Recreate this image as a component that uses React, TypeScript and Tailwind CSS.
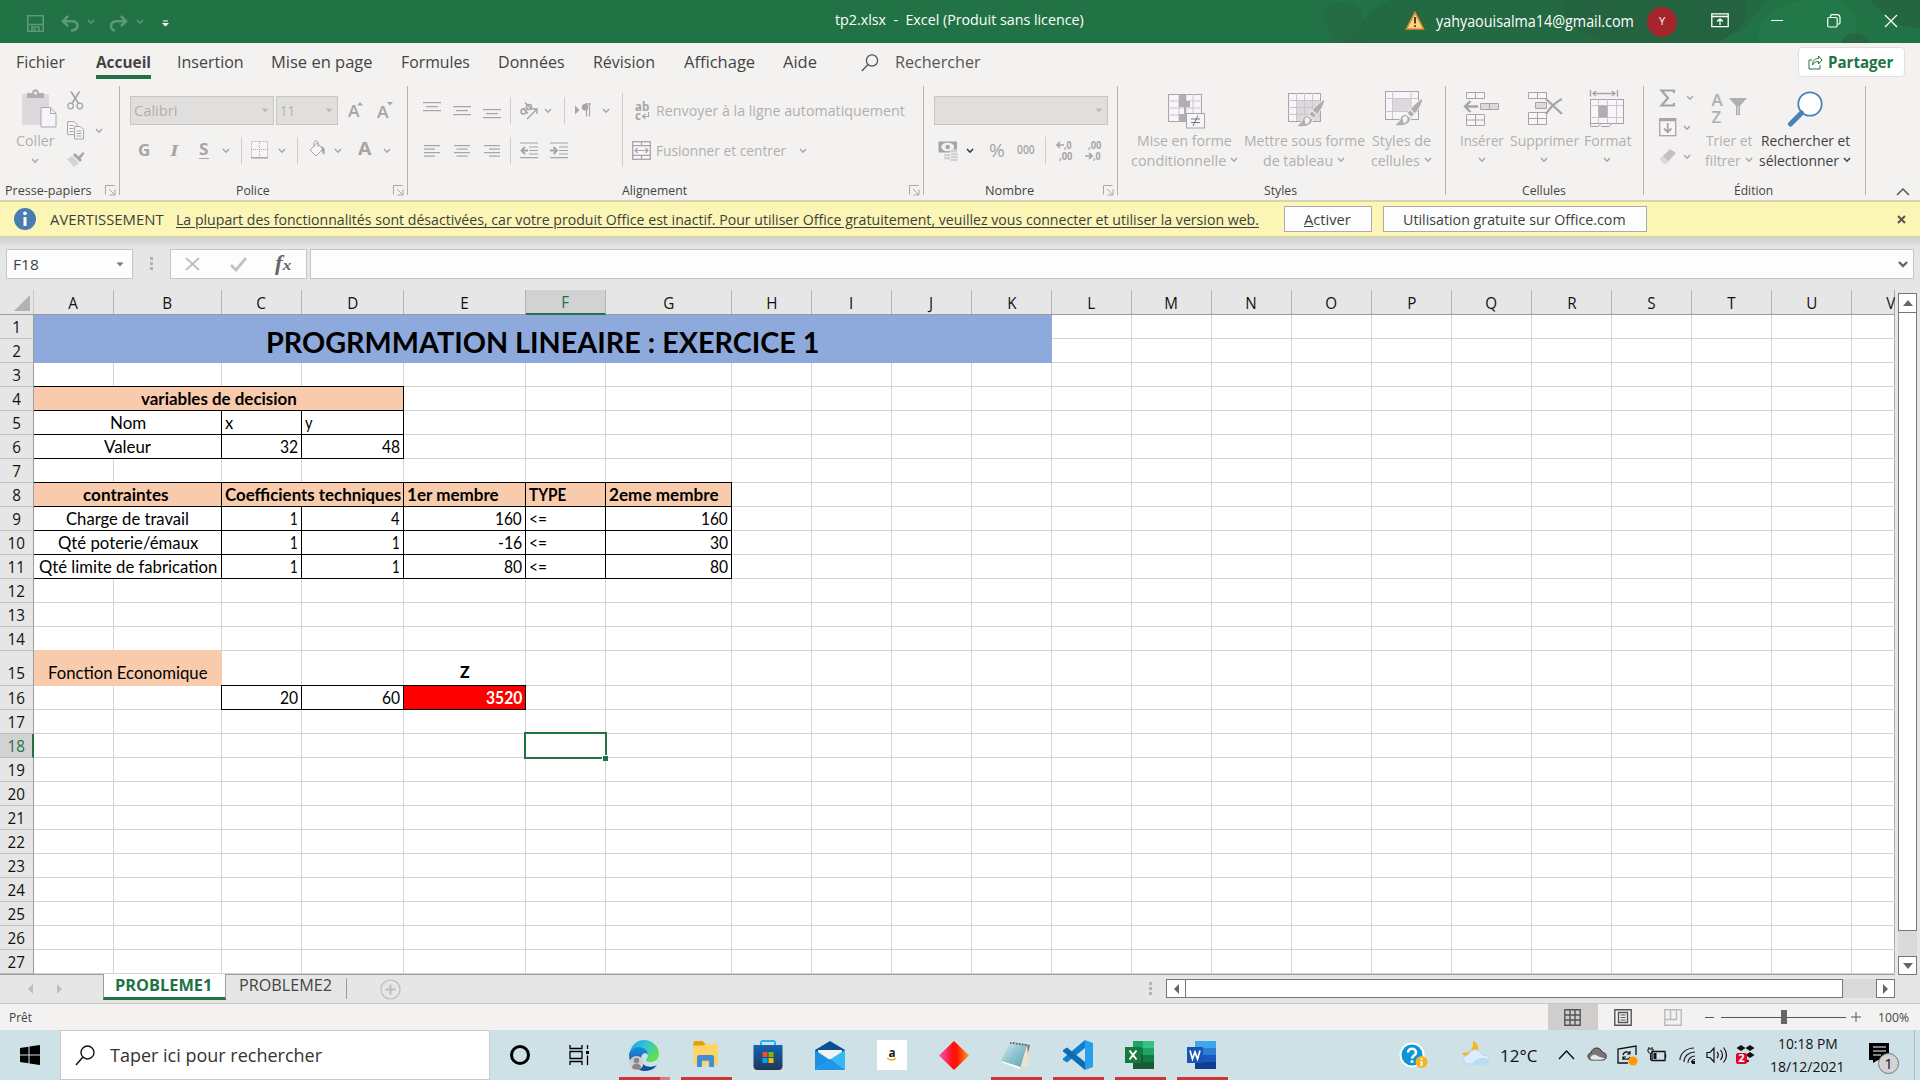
import { useLayoutEffect, useRef, useState, type ReactNode } from "react";

/* Text squeezed or stretched horizontally to a known width. */
function Fit({ w, className = "", children }: { w: number; className?: string; children: ReactNode }) {
  const ref = useRef<HTMLSpanElement>(null);
  const [scale, setScale] = useState(1);
  useLayoutEffect(() => {
    if (ref.current && ref.current.offsetWidth) setScale(w / ref.current.offsetWidth);
  }, [w]);
  return (
    <span className={"block shrink-0 whitespace-nowrap leading-none " + className} style={{ width: w }}>
      <span ref={ref} className="inline-block origin-left leading-none whitespace-pre" style={{ transform: `scaleX(${scale})` }}>
        {children}
      </span>
    </span>
  );
}

function Svg({ w, h, className = "", children }: { w: number; h: number; className?: string; children: ReactNode }) {
  return (
    <svg width={w} height={h} viewBox={`0 0 ${w} ${h}`} fill="none" className={"block shrink-0 " + className}>
      {children}
    </svg>
  );
}

const G = "#a6a4a6";
const GF = "#b0aeb2";

function Chev({ className = "", color = "#a9a7a9" }: { className?: string; color?: string }) {
  return (
    <Svg w={8} h={6} className={className}>
      <path d="M1 1l3 3.2L7 1" stroke={color} strokeWidth="1.5" />
    </Svg>
  );
}
function Tri({ className = "", color = "#777" }: { className?: string; color?: string }) {
  return (
    <Svg w={8} h={5} className={className}>
      <path d="M.5.5h7L4 4.5z" fill={color} />
    </Svg>
  );
}
const Sep = ({ className = "" }: { className?: string }) => <div className={"h-[27px] w-px shrink-0 bg-[#cfcdcc] " + className} />;

function Launcher({ className = "" }: { className?: string }) {
  return (
    <Svg w={11} h={11} className={className}>
      <path d="M.5 9.500V.5h9M4 4l5.500 5.500M10 4.500V10H4.500" stroke="#a9a7a5" />
    </Svg>
  );
}

function Lines({ rows, className = "", w = 18 }: { rows: number[][]; className?: string; w?: number }) {
  return (
    <Svg w={w} h={18} className={className}>
      {rows.map(([x, y, len]) => (
        <rect key={y} x={x} y={y} width={len} height="1.200" fill={G} />
      ))}
    </Svg>
  );
}

/* ---------- title bar ---------- */
function TitleBar() {
  return (
    <div className="relative flex h-[43px] items-center overflow-hidden bg-[#217346] text-white">
      <svg className="absolute right-0 top-0" width="640" height="43" viewBox="0 0 640 43">
        <path d="M45 8C58-2 78 2 82 14c4 10-2 16 4 29H50c8-12-14-22-5-35z" fill="#246b43" />
        <path d="M110 0h375c-8 14-16 26-30 34l-34 9H60c26-6 14-28 50-43z" fill="#246640" opacity=".75" />
        <path d="M284 0h180c6 16-4 33-28 43H330c-30-8-50-24-46-43z" fill="#246340" />
        <path d="M480 43c-10-20 20-43 50-43h30c20 14 20 30 12 43z" fill="#227848" />
        <path d="M562 43c2-12 20-14 28 0zM590 0h50v28c-20 2-36-12-50-28z" fill="#246640" />
      </svg>
      <Svg w={17} h={17} className="ml-[27px] mt-[3px]">
        <path d="M.8.8h15.400v15.400H.8zM1 9.500h15M5 16v-4h7v4M7.500 13v3" stroke="#5d9877" strokeWidth="1.600" />
      </Svg>
      <Svg w={19} h={17} className="ml-[17px] mt-1">
        <path d="M2 6.200h9.500c7 .3 7 8.800-1.500 9.300M7 1L2 6.200l5 5" stroke="#5d9877" strokeWidth="2.600" />
      </Svg>
      <Chev className="ml-[7px]" color="#5d9877" />
      <Svg w={19} h={17} className="ml-[14px] mt-1">
        <path d="M17 6.200H7.500c-7 .3-7 8.800-1.500 9.300M12 1l5 5.200-5 5" stroke="#5d9877" strokeWidth="2.600" />
      </Svg>
      <Chev className="ml-[8px]" color="#5d9877" />
      <Svg w={7} h={7} className="ml-[18px] mt-[3px]">
        <path d="M1 1h5" stroke="#fff" />
        <path d="M0 3h7L3.500 6.500z" fill="#fff" />
      </Svg>
      <Fit w={249} className="ml-[666px] mt-[-5px] text-[15px]">tp2.xlsx  -  Excel (Produit sans licence)</Fit>
      <div className="relative ml-auto flex items-center">
        <Svg w={20} h={19} className="-mt-[2px]">
          <path d="M10 1.500L18.500 18h-17z" fill="#fbd488" stroke="#e08a2c" strokeWidth="1.600" />
          <path d="M10 6v6.500M10 14.300v1.800" stroke="#333" strokeWidth="1.800" />
        </Svg>
        <Fit w={198} className="ml-[11px] text-[15.5px]">yahyaouisalma14@gmail.com</Fit>
        <div className="ml-[13px] grid size-[30px] place-items-center rounded-full bg-[#a4262c] text-[11px]">Y</div>
        <Svg w={18} h={15} className="ml-[34px] -mt-[2px]">
          <path d="M.8.8h16.400v12.900H.8zM1 3.500h16M9 12V6M6 8.500L9 5.800l3 2.700" stroke="#fff" strokeWidth="1.300" />
        </Svg>
        <div className="-mt-[2px] ml-[42px] h-px w-[12px] bg-white" />
        <Svg w={14} h={14} className="ml-[44px] -mt-[2px]">
          <rect x=".7" y="3.500" width="9.500" height="9.500" rx="1.500" stroke="#fff" strokeWidth="1.200" />
          <path d="M3.500 3V1.800Q3.500.7 5 .7h5q3 0 3 3v5q0 1.500-2 1.500" stroke="#fff" strokeWidth="1.200" />
        </Svg>
        <Svg w={14} h={14} className="ml-[43px] mr-[22px] -mt-[2px]">
          <path d="M1 1l12 12M13 1L1 13" stroke="#fff" strokeWidth="1.300" />
        </Svg>
      </div>
    </div>
  );
}

/* ---------- ribbon tabs ---------- */
const tabs: [string, number, string][] = [
  ["Fichier", 49, "ml-[16px]"],
  ["Accueil", 55, "ml-[31px]"],
  ["Insertion", 67, "ml-[26px]"],
  ["Mise en page", 102, "ml-[27px]"],
  ["Formules", 69, "ml-[28px]"],
  ["Données", 67, "ml-[28px]"],
  ["Révision", 62, "ml-[28px]"],
  ["Affichage", 71, "ml-[29px]"],
  ["Aide", 34, "ml-[28px]"],
];
function Tabs() {
  return (
    <div className="flex h-[43px] text-[#444]">
      {tabs.map(([t, w, m]) => (
        <div key={t} className={"flex h-[36px] flex-col pt-[11px] " + m}>
          <Fit w={w} className={t === "Accueil" ? "text-[16.5px] font-bold" : "text-[16.5px]"}>{t}</Fit>
          {t === "Accueil" && <div className="mt-auto h-[4px] bg-[#217346]" />}
        </div>
      ))}
      <Svg w={18} h={18} className="ml-[44px] mt-[11px]">
        <circle cx="11" cy="6.500" r="5.600" stroke="#555" strokeWidth="1.300" />
        <path d="M7 10.500L.8 17" stroke="#555" strokeWidth="1.400" />
      </Svg>
      <Fit w={86} className="ml-[16px] mt-[11px] text-[16.5px] text-[#555]">Rechercher</Fit>
      <div className="ml-auto mr-[15px] mt-[4px] flex h-[30px] w-[107px] items-center rounded border border-[#e1dfdd] bg-white">
        <Svg w={15} h={15} className="ml-[9px]">
          <path d="M4 5H1v9h11v-4M4.500 10c0-5 3-6.500 6-6.500V1l3.500 4-3.500 4V6.500c-3 0-4.500 1-6 3.500z" stroke="#217346" />
        </Svg>
        <Fit w={65} className="ml-[5px] text-[16px] font-bold text-[#217346]">Partager</Fit>
      </div>
    </div>
  );
}

/* ---------- ribbon ---------- */
function Group({ w, label, lw, lx, children, launcher = "" }: { w: string; label: string; lw: number; lx: string; children: ReactNode; launcher?: string }) {
  return (
    <div className={"flex h-[109px] shrink-0 flex-col border-r border-[#b5b3b1] " + w}>
      <div className="flex h-[96px] shrink-0">{children}</div>
      <div className="flex h-[13px] items-center">
        <Fit w={lw} className={"mt-[3px] text-[13px] text-[#444] " + lx}>{label}</Fit>
        {launcher && <Launcher className={"mt-[4px] " + launcher} />}
      </div>
    </div>
  );
}

function Big({ w, icon, l1, w1, l2 = "", w2 = 0, dark = false }: { w: string; icon: ReactNode; l1: string; w1: number; l2?: string; w2?: number; dark?: boolean }) {
  return (
    <div className={"flex shrink-0 flex-col items-center text-[15px] " + w + (dark ? " text-[#3f3f3f]" : " text-[#b1afad]")}>
      <div className="flex h-[46px] items-center">{icon}</div>
      <Fit w={w1} className="mt-[1px]">{l1}</Fit>
      <div className="mt-[5px] flex items-center gap-[4px]">
        {l2 && <Fit w={w2}>{l2}</Fit>}
        <Chev className={l2 ? "-mt-[2px]" : "mt-[4px]"} color={dark ? "#444" : "#a9a7a9"} />
      </div>
    </div>
  );
}

const brush = (
  <>
    <path d="M36.500 7c-7 5-12 10-15.500 15.500l4.500 3.500c5-4 9-10 11-16z" fill={GF} stroke="#f3f2f1" />
    <path d="M24 18.500l5 4.500" stroke="#f3f2f1" strokeWidth="1.300" />
    <path d="M20 23.500c-5 0-5 3-6 5s-3 4-6 6c8 1 15 0 17-7z" fill={GF} stroke="#f3f2f1" />
    <path d="M17 26c3-2 6 1 4 4-1 2-3 2-4 2 1-2-1-2 0-6z" fill="#f3f2f1" />
  </>
);

function Ribbon() {
  return (
    <div className="flex h-[115px] border-b border-[#d2d0ce]">
      <Group w="w-[120px]" label="Presse-papiers" lw={87} lx="ml-[5px]" launcher="ml-[13px]">
        <div className="ml-[10px] flex w-[50px] flex-col items-center text-[15px] text-[#b1afad]">
          <Svg w={36} h={40} className="ml-[8px] mt-[3px]">
            <rect x="1" y="5" width="27" height="31" rx="1.500" fill="#dcd8dc" />
            <path d="M6 9V4h5c0-5 7-5 7 0h5v5z" fill="#b0aeb2" />
            <circle cx="14.500" cy="4" r="1.500" fill="#f3f2f1" />
            <path d="M20 18.500h9.500l5.500 6V38H20z" fill="#f7f4fa" stroke="#aaa8ac" />
            <path d="M29.500 18.500v6H35" stroke="#aaa8ac" />
          </Svg>
          <Fit w={39} className="mt-[4px]">Coller</Fit>
          <Chev className="mt-[10px]" />
        </div>
        <div className="ml-[7px] flex w-[40px] flex-col">
          <Svg w={17} h={19} className="mt-[5px]">
            <path d="M4 .5l7.500 12M12.500.5L5 12.500" stroke={G} strokeWidth="1.700" />
            <circle cx="3.600" cy="15" r="2.800" stroke={G} strokeWidth="1.300" />
            <circle cx="12.800" cy="15" r="2.800" stroke={G} strokeWidth="1.300" />
          </Svg>
          <div className="mt-[11px] flex items-center">
            <Svg w={18} h={19}>
              <path d="M.6.6h6.500l3 3v10H.6zM2.500 4.500h4M2.500 7.500h4M2.500 10.500h4" stroke={G} fill="#f7f4fa" />
              <path d="M7.600 5.500h6l3 3V18h-9zM9.500 10h5M9.500 12.500h5M9.500 15h5" stroke={G} fill="#f7f4fa" />
            </Svg>
            <Chev className="ml-[10px]" />
          </div>
          <Svg w={18} h={16} className="mt-[11px]">
            <path d="M0 8l5-3 7 7-5 4z" fill="#d6d3d6" />
            <path d="M6 4l2-2 7 7-2 2z" fill={G} />
            <path d="M11 6l5-5 1.500 1.500-4.500 5.500z" fill={G} />
          </Svg>
        </div>
      </Group>

      <Group w="w-[288px]" label="Police" lw={34} lx="ml-[116px]" launcher="ml-[123px]">
        <div className="flex flex-col">
          <div className="mt-[10px] flex h-[29px] items-center text-[#b1afad]">
            <div className="ml-[10px] flex h-[29px] w-[144px] items-center border border-[#c8c6c4] bg-[#e1dfdd] px-[3px]">
              <Fit w={43} className="text-[15px]">Calibri</Fit>
              <Tri className="ml-auto mr-[1px]" color="#bdbbb9" />
            </div>
            <div className="ml-[2px] flex h-[29px] w-[62px] items-center border border-[#c8c6c4] bg-[#e1dfdd] px-[3px]">
              <Fit w={15} className="text-[15px]">11</Fit>
              <Tri className="ml-auto mr-[1px]" color="#bdbbb9" />
            </div>
            <Fit w={12} className="ml-[10px] mt-[1px] text-[16px] font-semibold text-[#a6a4a6]">A</Fit>
            <Svg w={6} h={4} className="ml-[-3px] mt-[-14px]"><path d="M0 3.500L3 0l3 3.500z" fill={G} /></Svg>
            <Fit w={12} className="ml-[14px] mt-[3px] text-[16px] font-semibold text-[#a6a4a6]">A</Fit>
            <Svg w={6} h={4} className="ml-[-2px] mt-[-14px]"><path d="M0 0h6L3 3.500z" fill={G} /></Svg>
          </div>
          <div className="mt-[12px] flex h-[27px] items-center text-[15.5px] font-bold text-[#a6a4a6]">
            <Fit w={12} className="ml-[18px]">G</Fit>
            <Fit w={9} className="ml-[20px] font-['Liberation_Serif'] text-[17px] italic">I</Fit>
            <Fit w={10} className="ml-[20px] border-b border-[#a6a4a6]">S</Fit>
            <Chev className="ml-[13px]" />
            <Sep className="ml-[11px]" />
            <Svg w={18} h={18} className="ml-[9px] mt-[-2px]">
              <rect x=".5" y=".5" width="16" height="16" fill="#f7f4fa" stroke={G} strokeDasharray="1 1" />
              <path d="M8.500 0v16M0 8.500h17" stroke={G} strokeDasharray="1 1" />
              <path d="M0 16.800h17" stroke={G} strokeWidth="1.500" />
            </Svg>
            <Chev className="ml-[9px]" />
            <Sep className="ml-[11px]" />
            <Svg w={18} h={18} className="ml-[10px] mt-[-4px]">
              <path d="M2 10l7-7 6 6-7 7z" fill="#f7f4fa" stroke={G} />
              <path d="M6 7V3c0-3 4-3 4 0v4" stroke={G} />
              <path d="M13 6c3 1 5 3 3 9-2-2-2-4-3-9z" fill={G} />
            </Svg>
            <Chev className="ml-[8px]" />
            <Fit w={13} className="ml-[16px] mt-[-6px] text-[18px]">A</Fit>
            <Chev className="ml-[12px]" />
          </div>
        </div>
      </Group>

      <Group w="w-[516px]" label="Alignement" lw={65} lx="ml-[214px]" launcher="ml-[222px]">
        <div className="flex flex-col">
          <div className="mt-[10px] flex h-[29px] items-center">
            <Lines className="ml-[15px]" rows={[[0, 0, 18], [3, 4, 12], [0, 8, 18]]} />
            <Lines className="ml-[12px]" rows={[[0, 4, 18], [3, 8, 12], [0, 12, 18]]} />
            <Lines className="ml-[12px]" rows={[[0, 7, 18], [3, 11, 12], [0, 15, 18]]} />
            <Sep className="ml-[9px]" />
            <Svg w={20} h={20} className="ml-[8px]">
              <circle cx="4.500" cy="10.500" r="2.500" stroke={G} strokeWidth="1.500" />
              <path d="M4 7l5 5.500M6 1.500l6.500 6.500" stroke={G} strokeWidth="1.500" />
              <circle cx="10" cy="6" r="2.500" stroke={G} strokeWidth="1.500" />
              <path d="M8 18l9.500-9.500M13 8h5v5" stroke={G} strokeWidth="1.400" />
            </Svg>
            <Chev className="ml-[5px]" />
            <Sep className="ml-[12px]" />
            <Svg w={17} h={15} className="ml-[10px]">
              <path d="M0 2.500l4.500 4.500L0 11.500z" fill={G} />
              <path d="M10 .8h6M11.500 1v12.500M14.500 1v12.500" stroke={G} strokeWidth="1.200" />
              <circle cx="10" cy="4.300" r="3.200" fill={G} />
            </Svg>
            <Chev className="ml-[10px] mr-[2px]" />
          </div>
          <div className="mt-[12px] flex h-[27px] items-center">
            <Lines className="ml-[16px]" w={16} rows={[[0, 3, 16], [0, 6.500, 11], [0, 10, 16], [0, 13.500, 11]]} />
            <Lines className="ml-[14px]" w={16} rows={[[0, 3, 16], [2.500, 6.500, 11], [0, 10, 16], [2.500, 13.500, 11]]} />
            <Lines className="ml-[14px]" w={16} rows={[[0, 3, 16], [5, 6.500, 11], [0, 10, 16], [5, 13.500, 11]]} />
            <Sep className="ml-[10px]" />
            <Svg w={18} h={17} className="ml-[9px]">
              <path d="M0 1h18M9 5h9M9 8.500h9M9 12h9M0 15.700h18" stroke={G} strokeWidth="1.200" />
              <path d="M8 8.500H1.500M5 5L1.500 8.500 5 12" stroke={G} strokeWidth="1.900" />
            </Svg>
            <Svg w={18} h={17} className="ml-[12px]">
              <path d="M0 1h18M9 5h9M9 8.500h9M9 12h9M0 15.700h18" stroke={G} strokeWidth="1.200" />
              <path d="M0 8.500h6.500M3.500 5L7 8.500 3.500 12" stroke={G} strokeWidth="1.900" />
            </Svg>
          </div>
        </div>
        <div className="ml-[10px] mt-[7px] h-[74px] w-px bg-[#cfcdcc]" />
        <div className="flex flex-col text-[15px] text-[#b1afad]">
          <div className="mt-[10px] flex h-[29px] items-center">
            <div className="ml-[12px] flex w-[17px] flex-col text-[11.5px] font-bold text-[#a6a4a6]">
              <div className="h-[9px] leading-[9px]">ab</div>
              <div className="flex h-[9px] leading-[9px]">c
                <Svg w={9} h={8} className="mt-[1px]"><path d="M7.500 0v4.500H2M4.500 2L1.500 4.500l3 2.500" stroke={G} strokeWidth="1.200" /></Svg>
              </div>
            </div>
            <Fit w={249} className="ml-[4px]">Renvoyer à la ligne automatiquement</Fit>
          </div>
          <div className="mt-[12px] flex h-[27px] items-center">
            <Svg w={19} h={19} className="ml-[9px]">
              <rect x=".7" y=".7" width="17.600" height="17.600" fill="#f7f4fa" stroke={G} strokeWidth="1.300" />
              <path d="M.7 4.700h17.600M.7 14.300h17.600M9.500.7v4M9.500 14.300v4M3 9.500h13M5.500 7L3 9.500 5.500 12M13.500 7L16 9.500 13.500 12" stroke={G} strokeWidth="1.200" />
            </Svg>
            <Fit w={130} className="ml-[5px]">Fusionner et centrer</Fit>
            <Chev className="ml-[13px]" />
          </div>
        </div>
      </Group>

      <Group w="w-[194px]" label="Nombre" lw={49} lx="ml-[61px]" launcher="ml-[69px]">
        <div className="flex flex-col">
          <div className="ml-[10px] mt-[10px] flex h-[29px] w-[174px] items-center justify-end border border-[#c8c6c4] bg-[#e1dfdd] pr-[4px]">
            <Tri color="#bdbbb9" />
          </div>
          <div className="mt-[12px] flex h-[27px] items-center text-[#a6a4a6]">
            <Svg w={20} h={20} className="ml-[14px]">
              <rect x=".5" y=".5" width="18.500" height="11" fill={G} />
              <ellipse cx="9.700" cy="6" rx="6.500" ry="4.200" fill="#f3f2f1" />
              <circle cx="9.700" cy="6" r="2.200" fill={G} />
              <path d="M12 8.500h8V20H5v-8h7z" fill="#f3f2f1" />
              <path d="M12.500 9.500h6v1.500h-6zM13.500 12.500h6V14h-6zM6.500 13.500h5.500V15H6.500zM13.500 15.500h6V17h-6zM6.500 16.500h5.500V18H6.500zM13 18.500h6v1h-6z" fill="#d6d3d6" stroke="#c4c1c6" strokeWidth=".5" />
            </Svg>
            <Chev className="ml-[8px]" color="#333" />
            <Fit w={16} className="ml-[15px] mt-[-2px] text-[18px]">%</Fit>
            <Fit w={18} className="ml-[12px] mt-[-2px] text-[12px] font-semibold">000</Fit>
            <Sep className="ml-[10px]" />
            <div className="ml-[10px] flex flex-col items-end gap-[1px] text-[10px] font-bold">
              <div className="flex items-center"><Svg w={8} h={8}><path d="M8 4H1.500M4 1L1 4l3 3" stroke={G} strokeWidth="1.700" /></Svg><Fit w={8}>,0</Fit></div>
              <Fit w={13}>,00</Fit>
            </div>
            <div className="ml-[13px] flex flex-col items-end gap-[1px] text-[10px] font-bold">
              <Fit w={13}>,00</Fit>
              <div className="flex items-center"><Svg w={8} h={8}><path d="M0 4h6.500M4 1l3 3-3 3" stroke={G} strokeWidth="1.700" /></Svg><Fit w={8}>,0</Fit></div>
            </div>
          </div>
        </div>
      </Group>

      <Group w="w-[328px]" label="Styles" lw={33} lx="ml-[146px]">
        <Big w="ml-[12px] w-[108px]" l1="Mise en forme" w1={95} l2="conditionnelle" w2={95} icon={
          <Svg w={37} h={36} className="ml-[4px] mt-[3px]">
            <rect x=".5" y="1.500" width="33" height="27" fill="#f7f4fa" stroke={G} />
            <path d="M11 1v28M18 1v28M25 1v28M0 8h34M0 15h34M0 22h34" stroke="#cac7cc" />
            <path d="M11 2h7v6h4v6h-4v8h3v6H11v-7h5v-7h-5z" fill={GF} />
            <rect x="18.500" y="20.500" width="18" height="14.500" fill="#f7f4fa" stroke={G} />
            <path d="M23 26h9M23 29.500h9M30 22.500L25 33" stroke="#777" />
          </Svg>} />
        <Big w="ml-[-2px] w-[136px]" l1="Mettre sous forme" w1={121} l2="de tableau" w2={70} icon={
          <Svg w={37} h={36} className="ml-[5px] mt-[2px]">
            <rect x=".5" y="1.500" width="32" height="28" fill="#f7f4fa" stroke={G} />
            <path d="M9 9h23v20H9z" fill="#dcd8dc" />
            <path d="M8.500 1v28M16.500 1v28M24.500 1v28M0 8.500h32M0 15.500h32M0 22.500h32" stroke="#cac7cc" />
            {brush}
          </Svg>} />
        <Big w="ml-[-4px] w-[66px]" l1="Styles de" w1={59} l2="cellules" w2={49} icon={
          <Svg w={38} h={38} className="ml-[6px]">
            <rect x=".5" y="1.500" width="33" height="28" fill="#f7f4fa" stroke={G} />
            <path d="M8 8h18v14H8z" fill="#dcd8dc" />
            <path d="M7.500 1v28M26 1v28M0 8.500h33M0 21.500h33" stroke="#cac7cc" />
            <g transform="translate(1 1)">{brush}</g>
          </Svg>} />
      </Group>

      <Group w="w-[198px]" label="Cellules" lw={44} lx="ml-[76px]">
        <Big w="ml-[9px] w-[54px]" l1="Insérer" w1={44} icon={
          <Svg w={37} h={36} className="-ml-[2px]">
            <path d="M3.500 1.500h18v6h-18zM12.500 1.500v6M3.500 23.500h18v11h-18zM12.500 23.500v11M3.500 29h18" fill="#f7f4fa" stroke={G} />
            <path d="M17.500 12.500h18v6h-18zM26.500 12.500v6" fill="#dcd8dc" stroke={G} />
            <path d="M15 15.500H2M7.500 10L2 15.500 7.500 21" stroke={G} strokeWidth="2.400" />
          </Svg>} />
        <Big w="ml-[-1px] w-[72px]" l1="Supprimer" w1={69} icon={
          <Svg w={36} h={36} className="ml-[4px]">
            <path d="M.5 1.500h18v6H.5zM9.500 1.500v6M.5 21.500h18v12H.5zM9.500 21.500v12M.5 27.500h18" fill="#f7f4fa" stroke={G} />
            <path d="M7.500 11.500h11v6h-11z" fill="#dcd8dc" stroke={G} />
            <path d="M18 8l16 15M34 8c-7 3-12 9-16 15" stroke={G} strokeWidth="2.300" />
          </Svg>} />
        <Big w="ml-[0px] w-[54px]" l1="Format" w1={47} icon={
          <Svg w={36} h={38}>
            <path d="M1.500 0v6.500M28.500 0v6.500M4 3.500h22M7 1L4 3.500 7 6M23 1l3 2.500L23 6" stroke={G} strokeWidth="1.400" />
            <rect x="1.500" y="9.500" width="33" height="24" fill="#f7f4fa" stroke={G} />
            <path d="M9.500 9v24M18.500 9v24M27.500 9v24M1 15.500h33M1 27.500h33" stroke="#cac7cc" />
            <rect x="9.500" y="15.500" width="9" height="12" fill={GF} />
            <path d="M1.500 33v3.500h8l3-3.500M12 36.500h8l3-3.500" stroke={G} />
          </Svg>} />
      </Group>

      <Group w="w-[222px]" label="Édition" lw={39} lx="ml-[90px]">
        <div className="ml-[15px] flex w-[37px] flex-col">
          <div className="mt-[3px] flex items-center">
            <Svg w={18} h={18}><path d="M15 4V1.500H2.500L9 9l-6.500 7.500H15V14" stroke={G} strokeWidth="2.200" /></Svg>
            <Chev className="ml-[9px]" />
          </div>
          <div className="mt-[11px] flex items-center">
            <Svg w={18} h={19}>
              <rect x=".7" y=".7" width="16" height="17" fill="#f7f4fa" stroke={G} strokeWidth="1.300" />
              <path d="M1 2h16" stroke={G} strokeWidth="2.500" />
              <path d="M8.700 5v9M5 10.500l3.700 3.700 3.700-3.700" stroke={G} strokeWidth="1.800" />
            </Svg>
            <Chev className="ml-[6px]" />
          </div>
          <div className="mt-[11px] flex items-center">
            <Svg w={18} h={17}>
              <path d="M1 11L11 1l6 4-10 11H5z" fill="#c4c1c6" />
              <path d="M1 11l3-3 5 5-2 3H5z" fill="#dcd8dc" />
            </Svg>
            <Chev className="ml-[6px]" />
          </div>
        </div>
        <Big w="ml-[6px] w-[54px]" l1="Trier et" w1={46} l2="filtrer" w2={36} icon={
          <div className="-mt-[2px] flex text-[#b0aeb2]">
            <div className="flex w-[17px] flex-col text-[17px] font-semibold">
              <div className="h-[17px] leading-[17px]">A</div>
              <div className="h-[17px] leading-[17px]">Z</div>
            </div>
            <Svg w={18} h={18} className="mt-[7px]"><path d="M0 0h18l-7 8v9H7V8z" fill={GF} /><path d="M9 8v8" stroke="#e8e6e8" /></Svg>
          </div>} />
        <Big dark w="ml-[0px] w-[98px]" l1="Rechercher et" w1={89} l2="sélectionner" w2={80} icon={
          <Svg w={35} h={36}>
            <circle cx="22" cy="13" r="11.700" fill="#fff" stroke="#4a7fb8" strokeWidth="1.800" />
            <path d="M13.500 22L2.500 33" stroke="#4a7fb8" strokeWidth="5" strokeLinecap="round" />
          </Svg>} />
      </Group>
      <Svg w={14} h={9} className="ml-auto mr-[10px] mt-[101px]">
        <path d="M1 8l6-6 6 6" stroke="#555" strokeWidth="1.500" />
      </Svg>
    </div>
  );
}

function WarningBar() {
  return (
    <div className="flex h-[36px] items-center border-y border-[#dcd78f] bg-[#fcf6b6] text-[15px] text-[#3e3e3e]">
      <Svg w={22} h={22} className="ml-[14px]">
        <circle cx="11" cy="11" r="11" fill="#4a7cb4" />
        <path d="M11 9v9" stroke="#fff" strokeWidth="3" />
        <circle cx="11" cy="5.300" r="1.900" fill="#fff" />
      </Svg>
      <Fit w={114} className="ml-[14px]">AVERTISSEMENT</Fit>
      <Fit w={1083} className="ml-[12px]">
        <span className="underline underline-offset-[2px]">La plupart des fonctionnalités sont désactivées, car votre produit Office est inactif. Pour utiliser Office gratuitement, veuillez vous connecter et utiliser la version web.</span>
      </Fit>
      <div className="ml-[25px] flex h-[26px] w-[88px] items-center justify-center border border-[#ababab] bg-[#fdfdfd]">
        <Fit w={47} className="-ml-[1px]"><span className="underline">A</span>ctiver</Fit>
      </div>
      <div className="ml-[11px] flex h-[26px] w-[264px] items-center justify-center border border-[#ababab] bg-[#fdfdfd]">
        <Fit w={223} className="-ml-[1px]">Utilisation gratuite sur Office.com</Fit>
      </div>
      <Svg w={9} h={9} className="ml-auto mr-[14px]"><path d="M1 1l7 7M8 1L1 8" stroke="#555" strokeWidth="2" /></Svg>
    </div>
  );
}

const Dots = ({ className = "" }: { className?: string }) => (
  <div className={"flex flex-col gap-[2px] " + className}>
    <i className="size-[3px] bg-[#b3b3b3]" />
    <i className="size-[3px] bg-[#b3b3b3]" />
    <i className="size-[3px] bg-[#b3b3b3]" />
  </div>
);

function FormulaBar() {
  return (
    <div className="flex h-[53px] bg-linear-to-b from-[#cfcfcf] via-[#e6e6e6] via-20% to-[#e6e6e6] pt-[12px]">
      <div className="ml-[6px] flex h-[30px] w-[127px] items-center border border-[#c6c6c6] bg-[#fdfdfd] text-[#444]">
        <Fit w={26} className="ml-[6px] text-[15px]">F18</Fit>
        <Tri className="ml-auto mr-[8px]" />
      </div>
      <Dots className="ml-[17px] mt-[8px]" />
      <div className="ml-[17px] flex h-[30px] w-[137px] items-center border border-[#c6c6c6] bg-[#fdfdfd]">
        <Svg w={16} h={14} className="ml-[14px]"><path d="M1 1l13 12M14 1L1 13" stroke="#c2c2c2" strokeWidth="2" /></Svg>
        <Svg w={18} h={15} className="ml-[29px]"><path d="M1 8l5 5L16 1" stroke="#c2c2c2" strokeWidth="2.800" /></Svg>
        <Fit w={16} className="ml-[27px] mt-[-3px] font-['Liberation_Serif'] text-[20px] font-bold italic text-[#666]">f<span className="text-[15px]">x</span></Fit>
      </div>
      <div className="ml-[3px] flex h-[30px] w-[1604px] items-center justify-end border border-[#c6c6c6] bg-[#fdfdfd] pr-[5px]">
        <Svg w={10} h={7}><path d="M1 1l4 4 4-4" stroke="#666" strokeWidth="2.400" /></Svg>
      </div>
    </div>
  );
}

/* ---------- sheet ---------- */
const COLS = "ABCDEFGHIJKLMNOPQRSTUV".split("");
const ROWS = Array.from({ length: 27 }, (_, i) => i + 1);

type Cell = [string, string, string, number];
const box = "border border-black -ml-px -mt-px pt-[2px] ";
const boxA = "border border-l-0 border-black -mt-px pt-[2px] ";
const peach = "bg-[#f8cbad] ";
const ctr = "justify-center ";
const rgt = "justify-end pr-[3px] ";
const lft = "pl-[3px] ";
const cells: Cell[] = [
  ["variables de decision", boxA + peach + ctr + "font-bold col-[1/5] row-[4]", "", 156],
  ["Nom", boxA + ctr + "bg-white col-[1/3] row-[5]", "", 36],
  ["x", box + lft + "bg-white col-[3] row-[5]", "", 8],
  ["y", box + lft + "bg-white col-[4] row-[5]", "", 8],
  ["Valeur", boxA + ctr + "bg-white col-[1/3] row-[6]", "", 47],
  ["32", box + rgt + "bg-white col-[3] row-[6]", "", 18],
  ["48", box + rgt + "bg-white col-[4] row-[6]", "", 18],
  ["contraintes", boxA + peach + ctr + "pr-[3px] font-bold col-[1/3] row-[8]", "", 86],
  ["Coefficients techniques", box + peach + lft + "font-bold col-[3/5] row-[8]", "", 176],
  ["1er membre", box + peach + lft + "font-bold col-[5] row-[8]", "", 92],
  ["TYPE", box + peach + lft + "font-bold col-[6] row-[8]", "", 37],
  ["2eme membre", box + peach + lft + "font-bold col-[7] row-[8]", "", 110],
  ["Charge de travail", boxA + ctr + "bg-white col-[1/3] row-[9]", "", 123],
  ["1", box + rgt + "bg-white col-[3] row-[9]", "", 8],
  ["4", box + rgt + "bg-white col-[4] row-[9]", "", 9],
  ["160", box + rgt + "bg-white col-[5] row-[9]", "", 27],
  ["<=", box + lft + "bg-white col-[6] row-[9]", "", 18],
  ["160", box + rgt + "bg-white col-[7] row-[9]", "", 27],
  ["Qté poterie/émaux", boxA + ctr + "bg-white col-[1/3] row-[10]", "", 140],
  ["1", box + rgt + "bg-white col-[3] row-[10]", "", 8],
  ["1", box + rgt + "bg-white col-[4] row-[10]", "", 8],
  ["-16", box + rgt + "bg-white col-[5] row-[10]", "", 24],
  ["<=", box + lft + "bg-white col-[6] row-[10]", "", 18],
  ["30", box + rgt + "bg-white col-[7] row-[10]", "", 18],
  ["Qté limite de fabrication", boxA + ctr + "bg-white col-[1/3] row-[11]", "", 178],
  ["1", box + rgt + "bg-white col-[3] row-[11]", "", 8],
  ["1", box + rgt + "bg-white col-[4] row-[11]", "", 8],
  ["80", box + rgt + "bg-white col-[5] row-[11]", "", 18],
  ["<=", box + lft + "bg-white col-[6] row-[11]", "", 18],
  ["80", box + rgt + "bg-white col-[7] row-[11]", "", 18],
  ["Fonction Economique", peach + ctr + "-mt-px pt-[10px] pr-[2px] col-[1/3] row-[15]", "", 159],
  ["Z", ctr + "font-black pt-[6px] col-[5] row-[15]", "text-[17.5px]", 10],
  ["20", box + rgt + "bg-white col-[3] row-[16]", "", 18],
  ["60", box + rgt + "bg-white col-[4] row-[16]", "", 18],
  ["3520", box + rgt + "bg-[#ff0000] font-bold text-white col-[5] row-[16]", "", 36],
];
const COLT = "grid-cols-[80px_108px_80px_102px_122px_80px_126px_repeat(14,80px)_43px] ";
const ROWT = "grid-rows-[repeat(14,24px)_35px_repeat(12,24px)] ";

function Sheet() {
  return (
    <div className="flex h-[685px] bg-[#e6e6e6]">
      <div className="flex w-[1895px] flex-col border-r border-[#ababab]">
        <div className="flex h-[25px] border-b border-[#9b9b9b] text-[16px] text-[#111]">
          <div className="flex w-[34px] items-end justify-end border-r border-[#c9c9c9] pb-[3px] pr-[3px]">
            <Svg w={16} h={16}><path d="M16 0v16H0z" fill="#b2b2b2" /></Svg>
          </div>
          <div className={"grid w-[1860px] grid-rows-[24px] " + COLT}>
            {COLS.map((c) => (
              <div
                key={c}
                className={
                  "flex items-center justify-center overflow-hidden leading-none " +
                  (c === "V" ? "pl-[34px]" : "border-r border-[#b5b5b5]") +
                  (c === "F" ? " h-[25px] border-b-2 border-b-[#217346] bg-[#d2d2d2] text-[#217346]" : "")
                }
              >
                <span className="scale-x-[.95] pt-[1px]">{c}</span>
              </div>
            ))}
          </div>
        </div>
        <div className="flex">
          <div className={"grid w-[34px] " + ROWT}>
            {ROWS.map((r) => (
              <div
                key={r}
                className={
                  "flex items-end justify-center border-b border-b-[#bdbdbd] pb-[2px] text-[16px] leading-[18px] " +
                  (r === 18 ? "border-r-2 border-r-[#217346] bg-[#d2d2d2] text-[#217346]" : "border-r border-r-[#9b9b9b] text-[#111]")
                }
              >
                <span className={r === 15 ? "scale-x-[.95] -translate-y-px" : "scale-x-[.95]"}>{r}</span>
              </div>
            ))}
          </div>
          <div className={"relative grid w-[1860px] bg-white font-['Lato'] text-[16.5px] text-black " + COLT + ROWT}>
            <div className={"col-[1/-1] row-[1/-1] grid " + COLT + ROWT}>
              {ROWS.flatMap((r) => COLS.map((c) => (
                <div key={c + r} className={c === "V" ? "border-b border-[#d4d4d4]" : "border-b border-r border-[#d4d4d4]"} />
              )))}
            </div>
            <div className="z-10 col-[1/12] row-[1/3] flex items-end justify-center bg-[#8ea9db] pb-[7px] pr-[1px]">
              <Fit w={554} className="text-[28.5px] font-bold">PROGRMMATION LINEAIRE : EXERCICE 1</Fit>
            </div>
            {cells.map(([t, cls, size, w], i) => (
              <div key={i} className={"z-10 flex items-center " + cls}>
                <Fit w={w} className={size}>{t}</Fit>
              </div>
            ))}
            <div className="relative z-20 col-[6] row-[18] -mb-px -ml-[2px] -mt-[2px] -mr-px border-2 border-[#217346]">
              <i className="absolute -bottom-[4px] -right-[3px] size-[6px] border-l border-t border-white bg-[#217346]" />
            </div>
          </div>
        </div>
        <div className="h-px bg-[#9b9b9b]" />
      </div>
      <div className="ml-[3px] mt-[3px] flex w-[19px] flex-col">
        <div className="grid h-[20px] place-items-center border border-[#777] bg-white"><Svg w={10} h={6}><path d="M0 6l5-6 5 6z" fill="#666" /></Svg></div>
        <div className="-mt-px h-[619px] border border-[#777] bg-white" />
        <div className="h-[25px] bg-[#dadada]" />
        <div className="grid h-[19px] place-items-center border border-[#777] bg-white"><Svg w={10} h={6}><path d="M0 0h10L5 6z" fill="#666" /></Svg></div>
      </div>
    </div>
  );
}

function SheetTabs() {
  return (
    <div className="flex h-[29px] border-b border-[#c6c6c6] bg-[#e6e6e6]">
      <Svg w={5} h={10} className="ml-[28px] mt-[9px]"><path d="M5 0v10L0 5z" fill="#bdbdbd" /></Svg>
      <Svg w={5} h={10} className="ml-[24px] mt-[9px]"><path d="M0 0v10l5-5z" fill="#bdbdbd" /></Svg>
      <div className="-mt-px ml-[41px] flex h-[26px] w-[123px] items-center justify-center border-x border-b-[3px] border-x-[#9b9b9b] border-b-[#217346] bg-white">
        <Fit w={97} className="-ml-[2px] text-[15.5px] font-bold text-[#217346]">PROBLEME1</Fit>
      </div>
      <Fit w={93} className="ml-[13px] mt-[3px] text-[15.5px] text-[#444]">PROBLEME2</Fit>
      <div className="ml-[14px] mt-[3px] h-[21px] w-px bg-[#9b9b9b]" />
      <Svg w={21} h={21} className="ml-[33px] mt-[4px]">
        <circle cx="10.500" cy="10.500" r="9.500" stroke="#bdbdbd" strokeWidth="1.200" />
        <path d="M10.500 5.500v10M5.500 10.500h10" stroke="#bdbdbd" strokeWidth="2" />
      </Svg>
      <Dots className="ml-[748px] mt-[7px]" />
      <div className="ml-[14px] mt-[4px] flex h-[19px] w-[729px] bg-[#dadada]">
        <div className="grid w-[20px] place-items-center border border-[#777] bg-white"><Svg w={5} h={10}><path d="M5 0v10L0 5z" fill="#666" /></Svg></div>
        <div className="-ml-px w-[658px] border border-[#777] bg-white" />
        <div className="ml-auto grid w-[19px] place-items-center border border-[#777] bg-white"><Svg w={5} h={10}><path d="M0 0v10l5-5z" fill="#666" /></Svg></div>
      </div>
    </div>
  );
}

function StatusBar() {
  return (
    <div className="flex h-[26px] items-center bg-[#f3f2f1] text-[13px] text-[#444]">
      <Fit w={23} className="ml-[9px]">Prêt</Fit>
      <div className="ml-[1516px] grid h-[26px] w-[50px] place-items-center bg-[#d0cecd] pr-px">
        <Svg w={17} h={17}><path d="M.8.8h15.400v15.400H.8zM6 .8v15.400M11 .8v15.400M.8 6h15.400M.8 11h15.400" stroke="#555" strokeWidth="1.400" /></Svg>
      </div>
      <Svg w={18} h={17} className="ml-[16px]"><path d="M.8.8h16.400v15.400H.8zM4.500 3.500h9v10h-9z" stroke="#555" strokeWidth="1.400" /><path d="M6.500 6h5M6.500 8.500h5M6.500 11h5" stroke="#555" /></Svg>
      <Svg w={18} h={17} className="ml-[32px]"><path d="M.8.8h16.400v15.400H.8zM1 10.500h11.500V1M6.500 1v9.500" stroke="#bbb" strokeWidth="1.400" /></Svg>
      <div className="ml-[23px] h-px w-[9px] bg-[#555]" />
      <div className="ml-[7px] flex w-[125px] items-center">
        <div className="h-px w-[60px] bg-[#555]" />
        <div className="h-[14px] w-[6px] bg-[#666]" />
        <div className="h-px w-[59px] bg-[#555]" />
      </div>
      <Svg w={10} h={10} className="ml-[5px]"><path d="M5 0v10M0 5h10" stroke="#555" /></Svg>
      <Fit w={31} className="ml-[17px]">100%</Fit>
    </div>
  );
}

/* ---------- taskbar ---------- */
const apps: { name: string; on: boolean; icon: ReactNode }[] = [
  { name: "edge", on: true, icon: (
    <Svg w={30} h={31}>
      <defs>
        <linearGradient id="e1" x1="0" y1="0" x2="1" y2=".6"><stop stopColor="#1e9fe8" /><stop offset=".5" stopColor="#33c3d8" /><stop offset="1" stopColor="#64e04c" /></linearGradient>
        <linearGradient id="e2" x1="0" y1="0" x2="0" y2="1"><stop stopColor="#1b8fdd" /><stop offset="1" stopColor="#0c4c9a" /></linearGradient>
      </defs>
      <path d="M1 13C2 4 9 0 15 0c9 0 15 7 15 14 0 6-5 8-9 8-3 0-4-1-4-2s2-2 2-5c0-4-5-7-9-7-5 0-8 3-9 5z" fill="url(#e1)" />
      <path d="M0 15c0-5 5-8 10-8s9 4 9 8c-2-3-7-2-7 4 0 5 5 9 10 9 3 0 5-1 6-2-3 3-8 5-13 5C7 30 0 24 0 15z" fill="url(#e2)" />
      <path d="M12 18c0 8 8 11 16 7 0 0-4 6-11 5-6-1-8-6-5-12z" fill="#0d529f" />
      <circle cx="7.500" cy="23" r="7" fill="#d2d0ce" /><circle cx="7.500" cy="20.500" r="2.800" fill="#8a8886" /><path d="M3 28c0-6 9-6 9 0-2 2-7 2-9 0z" fill="#8a8886" />
    </Svg>) },
  { name: "explorer", on: true, icon: (
    <Svg w={28} h={29} className="-mt-[3px] h-[26px]">
      <path d="M0 2q0-2 2-2h8l3 3v5H0z" fill="#e2a108" />
      <path d="M0 5h11l3-2h12q1.500 0 1.500 1.500V26q0 1-1 1H1q-1 0-1-1z" fill="#fdd465" />
      <path d="M4 29V18q0-2.500 2.500-2.500h14q2.500 0 2.500 2.500v11h-5.500v-7h-8v7H4z" fill="#3e8fd6" />
    </Svg>) },
  { name: "store", on: false, icon: (
    <Svg w={30} h={31}>
      <defs><linearGradient id="s1" x1="0" y1="0" x2="0" y2="1"><stop stopColor="#1065b4" /><stop offset="1" stopColor="#213556" /></linearGradient></defs>
      <path d="M8 6V3q0-2 2-2h10q2 0 2 2v3" stroke="#2fb4f2" strokeWidth="2" />
      <path d="M.5 5h29v21q0 4-4 4h-21q-4 0-4-4z" fill="url(#s1)" />
      <path d="M9.500 12h5v5h-5z" fill="#f25022" /><path d="M15.500 12h5v5h-5z" fill="#7fba00" /><path d="M9.500 18h5v5h-5z" fill="#00a4ef" /><path d="M15.500 18h5v5h-5z" fill="#ffb900" />
    </Svg>) },
  { name: "mail", on: false, icon: (
    <Svg w={30} h={29}>
      <path d="M0 9L15 0l15 9v9H0z" fill="#0a4f94" /><path d="M3 9h24v8l-12 6L3 17z" fill="#f4f4f4" />
      <path d="M0 9v20h30z" fill="#1b8fe0" /><path d="M30 9v20L0 28z" fill="#35b9f4" /><path d="M30 29H0L15 18z" fill="#2196e6" />
    </Svg>) },
  { name: "amazon", on: false, icon: (
    <div className="relative grid size-[30px] place-items-center bg-white text-[14px] font-bold leading-none text-[#222]">
      <span className="-mt-[6px] scale-x-90 text-[13px]">a</span>
      <Svg w={10} h={4} className="absolute left-[10px] top-[18px]"><path d="M0 0q5 4 9 0" stroke="#f90" strokeWidth="1.300" /></Svg>
    </div>) },
  { name: "diamond", on: false, icon: (
    <Svg w={30} h={29}>
      <defs><linearGradient id="d1"><stop stopColor="#f953c6" /><stop offset=".45" stopColor="#ff1010" /><stop offset=".6" stopColor="#ff1500" /><stop offset="1" stopColor="#ff9c1a" /></linearGradient></defs>
      <path d="M15 0l15 14.500L15 29 0 14.500z" fill="url(#d1)" />
    </Svg>) },
  { name: "notepad", on: true, icon: (
    <Svg w={30} h={28}>
      <path d="M10 1l19 3-5 20-4 3z" fill="#8b7a55" /><path d="M26 3l2 22-9 2z" fill="#e9e3d0" />
      <defs><linearGradient id="n1" x1="0" y1="0" x2="1" y2="1"><stop stopColor="#dff0f4" /><stop offset=".5" stopColor="#8fc3d0" /><stop offset="1" stopColor="#62a5b6" /></linearGradient></defs>
      <path d="M9 1l17 3-7 22L0 20z" fill="url(#n1)" /><path d="M0 20l19 6v2L2 22z" fill="#fff" />
      <path d="M9 2l17 2" stroke="#555" strokeWidth="1.500" strokeDasharray="1.500 1.500" />
    </Svg>) },
  { name: "vscode", on: true, icon: (
    <Svg w={30} h={30}>
      <path d="M22 0l8 3v24l-8 3z" fill="#26a0ee" /><path d="M22 8L4 22.500 0 20v-1.500L22 0z" fill="#0f80cc" /><path d="M22 22L4 7.500 0 10v1.500L22 30z" fill="#0b6cb5" />
    </Svg>) },
  { name: "excel", on: true, icon: (
    <Svg w={30} h={29}>
      <path d="M8 0h21v28H8z" fill="#21a366" /><path d="M8 7h21v7H8z" fill="#107c41" /><path d="M18 0h11v7H18z" fill="#33c481" /><path d="M18 7h11v7H18z" fill="#21a366" /><path d="M8 14h21v14H8z" fill="#185c37" /><path d="M18 14h11v7H18z" fill="#107c41" />
      <path d="M0 6h16v16H0z" fill="#17793f" /><path d="M4.500 9.500l7 9M11.500 9.500l-7 9" stroke="#fff" strokeWidth="2" />
    </Svg>) },
  { name: "word", on: true, icon: (
    <Svg w={30} h={29}>
      <path d="M8 0h21v8H8z" fill="#41a5ee" /><path d="M8 7h21v7H8z" fill="#2b7cd3" /><path d="M8 14h21v7H8z" fill="#185abd" /><path d="M8 21h21v7H8z" fill="#103f91" />
      <path d="M0 6h16v16H0z" fill="#1a55b5" /><path d="M3 9.500L5.500 18 8 11l2.500 7L13 9.500" stroke="#fff" strokeWidth="1.700" />
    </Svg>) },
];

function Taskbar() {
  return (
    <div className="flex h-[50px] items-center bg-[#cde1e7] text-[#111]">
      <Svg w={20} h={20} className="ml-[20px]">
        <path d="M0 3l8.500-1.200v7.700H0zM9.500 1.600L20 0v9.500H9.500zM0 10.500h8.500v7.700L0 17zM9.500 10.500H20V20L9.500 18.500z" fill="#000" />
      </Svg>
      <div className="ml-[20px] flex h-[50px] w-[430px] items-center border border-[#c9c9c9] bg-white">
        <Svg w={20} h={21} className="ml-[14px]"><circle cx="12.500" cy="7.500" r="6.500" stroke="#111" strokeWidth="1.400" /><path d="M8 12L1 20" stroke="#111" strokeWidth="1.500" /></Svg>
        <Fit w={212} className="ml-[15px] text-[18px] text-[#333]">Taper ici pour rechercher</Fit>
      </div>
      <div className="ml-[20px] size-[20px] rounded-full border-[3px] border-black" />
      <Svg w={21} h={20} className="ml-[39px]">
        <path d="M1 0v3.500h12V0M1 20v-3.500h12V20M1 6.500h12v7H1zM18.500 0v4M18.500 10.500V20" stroke="#000" strokeWidth="1.300" /><path d="M17 6h3v3h-3z" fill="#000" />
      </Svg>
      <div className="ml-[29px] flex gap-[11px]">
        {apps.map((a) => (
          <div key={a.name} className="relative flex h-[50px] w-[51px] items-center justify-center pr-[2px]">
            {a.icon}
            {a.on && (
              <div className="absolute inset-x-0 bottom-0 flex h-[3px] bg-[#cf3438]">
                {a.name === "edge" && <i className="ml-auto w-[10px] bg-[#e2797e]" />}
              </div>
            )}
          </div>
        ))}
      </div>
      <Svg w={29} h={28} className="ml-[171px] mt-[2px]">
        <circle cx="13" cy="13" r="12.500" fill="#fff" /><circle cx="13" cy="13" r="10.500" fill="#0a96d7" />
        <path d="M9 10.500c0-5 8-5 8 0 0 3-4 3-4 6" stroke="#fff" strokeWidth="2.600" /><circle cx="13" cy="19.500" r="1.600" fill="#fff" />
        <circle cx="22.500" cy="20" r="6" fill="#f5b324" /><path d="M22.500 19v5M22.500 16v1.800" stroke="#fff" strokeWidth="1.800" />
      </Svg>
      <Svg w={28} h={25} className="ml-[34px] -mt-[3px]">
        <path d="M11 0c1 8-3 12-11 12 3 6 14 5 16-2 1-5-2-9-5-10z" fill="#f9b615" />
        <path d="M6 23c-6-1-6-9 0-9 2-7 12-7 14 0 9-1 10 9 2 9z" fill="#dceefb" stroke="#b4d6ee" />
        <path d="M10 23c3-5 12-9 17-4 0 3-2 4-5 4z" fill="#b9dcf5" />
      </Svg>
      <Fit w={37} className="ml-[10px] mt-[2px] text-[16.5px]">12°C</Fit>
      <Svg w={17} h={10} className="ml-[21px]"><path d="M1 9l7.500-8L16 9" stroke="#111" strokeWidth="1.400" /></Svg>
      <Svg w={20} h={14} className="ml-[12px] -mt-[3px]">
        <path d="M4 13C0 12 0 6 4 6c1-6 9-7 11-1 6 1 5 8 1 8z" fill="#777" stroke="#333" /><path d="M4 12.500c-2-3 3-6 6-4s6 2 8 3c-1 2-12 1-14 1z" fill="#e9e9e9" />
      </Svg>
      <Svg w={21} h={21} className="ml-[10px]">
        <path d="M19 10V1L1 4v14h10" stroke="#111" strokeWidth="1.300" /><path d="M6 10c1-4 6-4 7-1M13 6v3h-3M13 12c-1 3-6 3-7 0M6 15v-3h3" stroke="#111" strokeWidth="1.200" /><circle cx="16" cy="16" r="4.600" fill="#ff9a05" />
      </Svg>
      <Svg w={20} h={16} className="ml-[9px]">
        <path d="M5 4.500h13v9H5zM18.500 7v4" stroke="#111" strokeWidth="1.300" /><path d="M6.500 6h3v6h-3z" fill="#111" /><path d="M1 2h5v3q-2.500 3-5 0zM2 0v2M5 0v2M3.500 6v7H5" stroke="#111" />
      </Svg>
      <Svg w={17} h={17} className="ml-[12px]">
        <path d="M1 13C1 6 8 1 15 1M5 15c0-6 5-10 11-10M9 16c0-4 3-7 7-7M12.500 16c0-2 1-3.500 3.500-3.500" stroke="#222" strokeWidth="1.200" /><path d="M13 14h3v3h-3z" fill="#111" />
      </Svg>
      <Svg w={22} h={18} className="ml-[10px]">
        <path d="M1 6.500h3l4-4.500v14l-4-4.500H1zM11 6q2.500 3 0 6M14.500 4q4 5 0 10M17.500 1.500q6 7.500 0 15" stroke="#111" strokeWidth="1.200" />
      </Svg>
      <Svg w={20} h={20} className="ml-[8px]">
        <path d="M5 0l4.500 3L5 6 .5 3zM14 0l4.500 3L14 6 9.500 3zM14 7l4.500 3-4.500 3-4.500-3zM9.500 13.500l4 2.500-2 1.500z" fill="#111" />
        <rect y="8" width="11" height="11" rx="2" fill="#e2062c" /><text x="2.300" y="17.300" fontSize="11" fontWeight="700" fill="#fff" fontFamily="Open Sans">2</text>
      </Svg>
      <div className="ml-[14px] flex w-[75px] flex-col items-center gap-[8px] text-[15px]">
        <Fit w={60}>10:18 PM</Fit>
        <Fit w={75}>18/12/2021</Fit>
      </div>
      <div className="relative ml-[24px] h-[32px] w-[30px]">
        <Svg w={21} h={20} className="mt-[4px]"><path d="M0 0h20v17H9l-5 3v-3H0z" fill="#000" /><path d="M4 4h13M4 8h13M4 12h8" stroke="#fff" strokeWidth="1.200" /></Svg>
        <div className="absolute left-[9px] top-[14px] grid size-[21px] place-items-center rounded-full border border-[#777] bg-[#d3d3d3] text-[15px] leading-none">1</div>
      </div>
      <div className="ml-auto mr-[5px] h-[50px] w-px bg-[#a9bcc3]" />
    </div>
  );
}

export default function App() {
  return (
    <div className="h-[1080px] w-[1920px] overflow-hidden bg-[#f3f2f1] font-['Open_Sans',sans-serif]">
      <TitleBar />
      <Tabs />
      <Ribbon />
      <WarningBar />
      <FormulaBar />
      <Sheet />
      <SheetTabs />
      <StatusBar />
      <Taskbar />
    </div>
  );
}
